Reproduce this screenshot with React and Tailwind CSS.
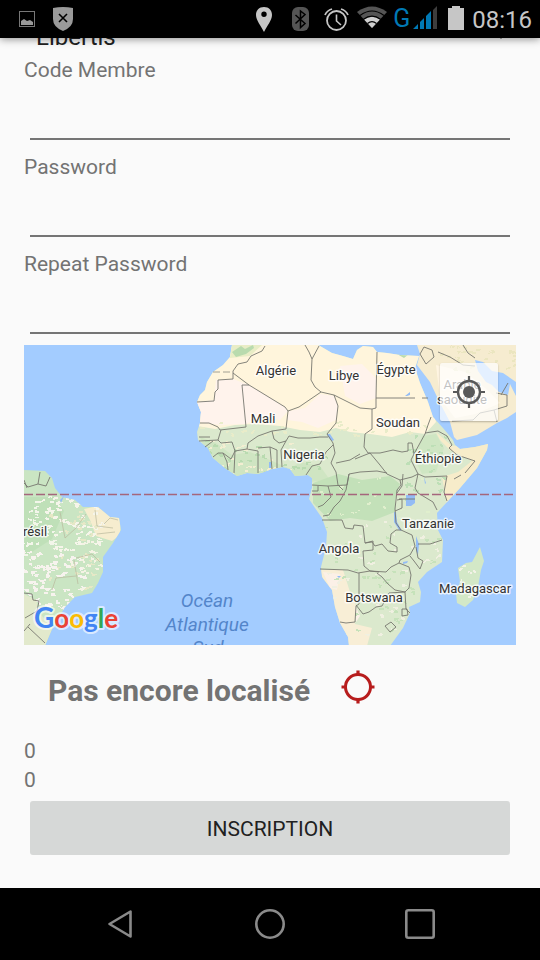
import React from 'react';

const AFRICA =
  'M232 345 L230 357 L223 365 L213 372 L207 382 L205 390 L200 395 L197 402 L201 412 L200 423 L197 432 L198 440 L208 448 L213 458 L225 468 L237 476 L247 473 L258 474 L272 469 L283 467 L290 469 L295 476 L308 475 L312 478 L312 488 L309 499 L315 508 L322 518 L327 532 L326 547 L321 567 L322 577 L332 590 L335 607 L340 623 L348 637 L349 646 L390 646 L403 628 L410 613 L409 607 L420 602 L421 592 L418 582 L427 572 L442 562 L443 540 L438 530 L437 513 L447 502 L460 488 L477 468 L487 450 L488 444 L475 447 L460 449 L455 445 L453 440 L443 428 L433 417 L428 402 L420 383 L415 368 L419 356 L400 355 L387 353 L377 352 L373 347 L363 346 L357 350 L353 359 L343 356 L332 353 L320 346 L316 344 Z';
const ARABIA =
  'M417 345 L420 354 L417 365 L430 382 L440 403 L450 422 L454 437 L457 440 L477 435 L497 423 L507 418 L516 412 L516 344 Z';
const GULF =
  'M475 360 L483 362 L492 371 L503 373 L516 382 L516 396 L510 384 L508 395 L499 392 L492 385 L486 382 L478 371 Z';
const BRAZIL =
  'M24 470 L45 471 L52 478 L55 488 L62 497 L75 500 L83 507 L98 507 L110 517 L119 518 L121 530 L113 543 L103 557 L103 572 L98 583 L92 593 L75 597 L65 607 L53 627 L45 646 L20 646 Z';
const MADAGASCAR =
  'M480 547 L484 561 L481 570 L478 587 L473 600 L465 607 L457 603 L456 593 L460 582 L458 568 L466 563 L472 562 Z';

const BORDERS = [
  // North-west Africa
  'M265 346 L262 351 L251 356 L247 362 L238 364 L233 371 L233 379 L218 380 L218 389 L215 392 L214 401 L197 402',
  'M233 373 L249 385 L285 407 L288 411 L299 407 L321 392 L334 395 L360 408',
  'M249 385 L242 385 L246 427 L220 430 L218 427 L209 423 L200 423',
  'M305 345 L309 352 L312 359 L319 346',
  'M312 359 L311 380 L315 387 L321 392',
  'M288 411 L286 429 L272 431 L258 436 L248 443 L247 449 L235 451 L232 442 L221 443 L218 440 L221 430',
  'M334 395 L338 406 L336 423 L327 434 L333 443 L335 453 L331 463 L336 472 L338 485',
  'M272 431 L274 439 L279 443 L286 441 L289 436 L298 438 L310 438 L320 437 L328 437',
  'M199 437 L210 437 M199 441 L218 440 M205 447 L213 441 M213 457 L218 453 L223 453 L227 462 L228 470 M223 453 L231 459 L235 451',
  'M235 451 L234 473 M247 449 L258 451 L258 473 M258 448 L270 447 L272 469 M270 447 L277 450 L277 468 M282 467 L281 450 L286 441',
  'M306 475 L312 466 L320 464 L326 452 L333 445 M336 463 L350 460 L360 454',
  // Sahel to the Horn
  'M377 352 L376 398 L415 398 M422 398 L428 398 M376 398 L376 408 L372 409 L372 429 L365 434 L364 447 L368 453 L380 453 L393 450 L402 452 L408 451 L408 443 L412 443 L414 454',
  'M360 408 L372 409 M355 459 L370 453 L380 465 L387 474 L400 480 L412 477 L418 474',
  'M431 417 L428 425 L425 434 L420 443 L414 454 L411 460 L418 474 L425 477 L447 476',
  'M425 433 L438 431 L447 436 L452 445 L449 448 L457 455 L475 461 L465 473',
  'M461 475 L454 479 M447 476 L444 492 L447 501 M418 474 L415 488 L418 493 L433 502 L437 510 M403 474 L402 486 L397 493',
  // Congo basin
  'M312 485 L328 486 L347 485 L349 474 L360 472 L377 471 L387 473 M338 485 L343 490 M349 474 L346 490 L340 501 L334 507 L329 515 L323 516 M328 486 L331 497 L323 505 L318 507 M312 491 L318 491 L318 486',
  'M400 480 L401 485 L397 490 L396 500 L395 509 L396 523 L401 530 M397 500 L402 499 L402 508 L395 511 M399 499 L415 499',
  'M322 520 L342 520 L345 528 L353 529 L354 525 L363 526 L365 543 L372 542 L375 546 L382 544 L388 551 L397 552 L397 547 L390 543 L391 534 L396 530 L401 530',
  'M365 543 L373 541 L373 550 L363 551 L364 566 L370 571 L386 572 L391 567 L399 563 L409 567 L411 575 L409 588 L405 592 L395 590 L388 584 L382 577 L377 573',
  'M320 569 L348 570 L358 573 L370 571 L379 572 M359 573 L359 604 L356 606 L355 622 L346 623 L340 622 M356 605 L363 614 L369 612 L376 607 L382 606 L389 593 L405 592 L406 609 L410 613',
  'M401 530 L412 535 L415 546 L410 555 L400 560 L399 563 M418 544 L430 544 L442 540 M416 547 L418 558 L423 561 L420 569 L414 561 L410 556',
  'M385 626 L391 622 L396 627 L390 632 Z M402 609 L407 609 L408 615 L402 616 Z',
  // Arabia
  'M420 354 L426 364 L434 357 L432 350 L424 347 L420 354 M438 352 L450 357 L463 365 L475 366 M463 345 L468 353 L475 358',
  'M452 421 L473 420 L480 413 L494 410 L497 422 M494 410 L507 406 L507 395 L496 393 M501 395 L508 383',
  // Brazil
  'M24 483 L28 487 L38 484 L46 486 L50 477 M38 484 L40 472 M24 480 L27 488',
  'M24 593 L32 594 L33 600 L39 601 L37 611 L25 618 M30 624 L24 631 M28 627 L45 643',
];

const LABELS = [
  ['Algérie', 276, 375],
  ['Libye', 344, 380],
  ['Égypte', 396, 374],
  ['Mali', 263, 423],
  ['Soudan', 398, 427],
  ['Nigeria', 304, 459],
  ['Éthiopie', 438, 463],
  ['Tanzanie', 428, 528],
  ['Angola', 339, 553],
  ['Botswana', 374, 602],
  ['Madagascar', 475, 593],
  ['résil', 35, 536],
];

// Irregular patches of ground cover: each one is a short random walk of small blocks.
function speckles(seed, count, x, y, w, h, steps = 1) {
  let s = seed;
  const next = () => {
    s = (s * 16807) % 2147483647;
    return s / 2147483647;
  };
  let d = '';
  for (let i = 0; i < count; i += 1) {
    let px = Math.round(x + next() * w);
    let py = Math.round(y + next() * h);
    for (let k = 0; k < steps; k += 1) {
      const a = 1 + Math.round(next() * 2);
      const b = 1 + Math.round(next());
      d += `M${px} ${py}h${a}v${b}h${-a}z`;
      px += Math.round(next() * 4 - 2);
      py += Math.round(next() * 2 - 1);
    }
  }
  return d;
}

function WorldMap() {
  return (
    <svg
      className="block h-full w-full"
      viewBox="24 345 492 300"
      preserveAspectRatio="xMidYMid slice"
      role="img"
      aria-label="Carte"
    >
      <defs>
        <clipPath id="africa"><path d={AFRICA} /></clipPath>
        <clipPath id="brazil"><path d={BRAZIL} /></clipPath>
        <clipPath id="madagascar"><path d={MADAGASCAR} /></clipPath>
        <clipPath id="arabia"><path d={ARABIA} /></clipPath>
      </defs>
      <rect x="24" y="345" width="492" height="300" fill="#a3ccff" />

      <path d={AFRICA} fill="#dbe9cd" />
      <g clipPath="url(#africa)">
        <path d="M190 340 H430 V400 L436 422 L425 434 L410 432 L392 437 L370 434 L350 432 L336 428 L320 432 L300 430 L280 426 L255 424 L235 425 L215 429 L190 425 Z" fill="#fff5dc" />
        <path d="M216 380 L233 379 L249 385 L285 407 L288 411 L280 420 L262 417 L246 424 L220 425 L200 422 L197 402 L214 400 Z M320 394 L334 396 L338 406 L336 420 L318 428 L302 422 L287 420 L289 411 L305 408 Z M340 366 L362 364 L376 378 L376 398 L360 404 L345 396 Z" fill="#fff3ec" />
        <path d="M231 345 H262 L250 356 L230 358 Z" fill="#e9edc6" />
        <path d="M232 352 l9 -6 4 3 8 -4 1 3 -8 6 -10 3z M397 354 l12 0 -5 4z" fill="#b9dbae" />
        <path d="M436 432 L452 446 L495 440 L480 480 L447 504 L442 477 L458 472 L472 461 L450 450 L440 440 Z" fill="#f7ecca" />
        <path d="M200 437 L216 443 L232 455 L250 452 L270 460 L290 469 L300 462 L320 466 L330 480 L310 482 L290 480 L230 480 L208 460 Z" fill="#cfe5c2" />
        <path d="M313 483 L338 474 L362 480 L390 476 L400 484 L395 500 L395 512 L372 521 L350 518 L330 521 L313 503 Z" fill="#c3e1b9" />
        <path d="M422 436 L436 434 L444 448 L436 472 L422 474 L415 460 Z" fill="#cfe6c3" />
        <path d="M320 570 L343 570 L350 592 L356 606 L355 624 L372 628 L367 646 L345 646 L333 610 Z" fill="#f8eed6" />
        <path d="M323 572 L340 574 L337 590 L330 588 Z M355 605 L360 616 L356 622 Z" fill="#fbf0e7" />
        <path d={speckles(41, 40, 205, 440, 90, 36, 3)} fill="#f3eed1" />
        <path d={speckles(43, 30, 205, 440, 120, 38, 4)} fill="#b9dbb0" />
        <path d={speckles(97, 50, 325, 515, 115, 130, 4)} fill="#f0f0e1" />
        <path d={speckles(99, 45, 325, 525, 115, 110, 4)} fill="#c6e2ba" />
        <path d={speckles(311, 20, 405, 435, 45, 70, 4)} fill="#bddfb6" />
        <path d={speckles(17, 25, 305, 475, 125, 50, 3)} fill="#e0efcd" />
        <path d={speckles(71, 30, 200, 422, 230, 14, 4)} fill="#e9ecc9" />
      </g>

      <path d={ARABIA} fill="#f6ecd0" />
      <g clipPath="url(#arabia)">
        <path d="M436 365 L465 372 L485 388 L500 403 L475 414 L455 418 L440 398 Z" fill="#fff5e2" />
        <path d={speckles(512, 30, 440, 345, 76, 26, 4)} fill="#ebe6c0" />
        <path d={GULF} fill="#a3ccff" />
      </g>

      <path d={BRAZIL} fill="#cae5c3" />
      <g clipPath="url(#brazil)">
        <path d="M24 497 h30 l10 14 -12 28 -28 18z" fill="#bfe0b8" />
        <path d="M84 509 L98 506 L121 518 L120 535 L112 541 L96 536 L90 520 Z" fill="#f6edcf" />
        <path d={speckles(601, 62, 44, 496, 56, 54, 5)} fill="#f6f5ea" />
        <path d={speckles(603, 40, 22, 494, 34, 60, 3)} fill="#f3f6ea" />
        <path d={speckles(607, 26, 50, 510, 50, 80, 5)} fill="#e6e8c6" />
        <path d={speckles(611, 80, 22, 552, 62, 58, 6)} fill="#f7f3ee" />
        <path d={speckles(619, 18, 70, 540, 32, 50, 4)} fill="#f4f3e4" />
        <path d="M24 594 L36 600 L40 614 L53 627 L45 646 H24 Z" fill="#e2e9cc" />
        <path d="M95 510 l2 16 16 2 M97 534 l18 -2 M104 524 l6 -6 8 2 M60 512 l5 26 11 -10 10 -14 M76 558 l16 -4 8 8 M52 590 l4 -12 20 -2 M74 560 l4 24" fill="none" stroke="#b9b79c" strokeWidth="0.7" />
      </g>
      <path d={MADAGASCAR} fill="#d3e8c7" />
      <g clipPath="url(#madagascar)">
        <path d={speckles(777, 12, 456, 550, 24, 50, 4)} fill="#f2f2e6" />
      </g>

      <g fill="#93bcf5">
        <path d="M406 495 h9 v8 l-4 3 h-5z M394 512 l2 0 1 10 5 9 -3 -1 -5 -8z M416 536 l3 8 -1 11 -2 -5z M327 434 l3 0 4 6 -2 1 -3 -3z M269 462 h2 v6 h-2z" />
        <path d="M424 477 l2 6 -1 1z M403 562 l5 -1 -1 2 -4 1z M337 576 h4 l-2 2z M405 396 l5 -4 0 3 -3 1z M60 500 l4 -4 -3 7z" />
      </g>

      <path d={BORDERS.join(' ')} fill="none" stroke="#77776f" strokeWidth="0.9" strokeLinejoin="round" />
      <path d="M213 372 H232" stroke="#8a8a80" strokeWidth="0.8" strokeDasharray="7 3" />
      <path d="M24 494.500 H516" stroke="#a5667c" strokeWidth="1.500" strokeDasharray="9 3" />

      <g
        fontFamily='Roboto, "Liberation Sans", sans-serif'
        fontSize="13"
        fill="#333333"
        stroke="#ffffff"
        strokeOpacity="0.75"
        strokeWidth="3"
        strokeLinejoin="round"
        paintOrder="stroke"
        textAnchor="middle"
      >
        {LABELS.map(([name, x, y]) => (
          <text key={name} x={x} y={y}>{name}</text>
        ))}
        <text x="462" y="389">Arabie</text>
        <text x="462" y="404">saoudite</text>
      </g>

      <g
        fontFamily='Roboto, "Liberation Sans", sans-serif'
        fontSize="19"
        fontStyle="italic"
        fill="#5385ca"
        textAnchor="middle"
      >
        <text x="207" y="607">Océan</text>
        <text x="207" y="631">Atlantique</text>
        <text x="208" y="654">Sud</text>
      </g>

      <text
        x="34"
        y="628"
        fontFamily='Lato, "Open Sans", sans-serif'
        fontSize="26"
        fontWeight="700"
        stroke="#ffffff"
        strokeOpacity="0.6"
        strokeWidth="4"
        strokeLinejoin="round"
        paintOrder="stroke"
      >
        <tspan fill="#4285f4" fontSize="28">G</tspan>
        <tspan fill="#ea4335">o</tspan>
        <tspan fill="#fbbc05">o</tspan>
        <tspan fill="#4285f4">g</tspan>
        <tspan fill="#34a853">l</tspan>
        <tspan fill="#ea4335">e</tspan>
      </text>
    </svg>
  );
}

function StatusBar() {
  return (
    <header className="relative z-10 flex h-[38px] items-center justify-between bg-black pl-[19px] pr-2 shadow-[0_1px_8px_rgba(0,0,0,0.45)]">
      <div className="flex items-center gap-[18px]">
        <svg width="16" height="26" viewBox="19 6 16 26" aria-hidden="true">
          <rect x="19.500" y="11.500" width="15" height="15" fill="none" stroke="#777" />
          <path d="M21 25 V21 L24 19 L27 21 L30 20 L33 22 V25 Z" fill="#999" />
        </svg>
        <svg width="20" height="26" viewBox="53 6 20 26" aria-hidden="true">
          <path d="M53 8 Q63 6 73 8 V19 Q73 27 63 31 Q53 27 53 19 Z" fill="#9a9a9a" />
          <path d="M59 14 L67 22 M67 14 L59 22" stroke="#000" strokeWidth="1.600" />
        </svg>
      </div>
      <div className="flex items-center gap-1">
        <svg width="28" height="26" viewBox="250 6 28 26" aria-hidden="true">
          <path fillRule="evenodd" d="M264 7 C259 7 256 10.500 256 15 C256 20 261 26 264 32 C267 26 272 20 272 15 C272 10.500 269 7 264 7 Z M264 11.500 a2.700 2.700 0 1 1 0 5.400 a2.700 2.700 0 1 1 0 -5.400 Z" fill="#c6c6c6" />
        </svg>
        <svg width="35" height="26" viewBox="282 6 35 26" aria-hidden="true">
          <rect x="292" y="7" width="17" height="24" rx="6" fill="#555" />
          <path d="M295.500 15 L305 23.500 L300.500 27.500 V11 L305 14.500 L295.500 23.500" fill="none" stroke="#000" strokeWidth="1.500" />
        </svg>
        <svg width="30" height="26" viewBox="321 6 30 26" fill="none" stroke="#c6c6c6" aria-hidden="true">
          <circle cx="336.500" cy="20.500" r="9.500" strokeWidth="1.800" />
          <path d="M336.500 14.500 V21 L341 25" strokeWidth="1.600" />
          <path d="M325 15 Q327 10.500 332 9 M348 15 Q346 10.500 341 9" strokeWidth="1.800" />
        </svg>
        <svg width="34" height="26" viewBox="355 6 34 26" aria-hidden="true">
          <path d="M372 28 L357 12 Q372 1 387 12 Z" fill="#555" />
          <path d="M372 28 L364 19.500 Q372 14 380 19.500 Z" fill="#d0d0d0" />
          <path d="M360 15.500 Q372 6.500 384 15.500 M363.500 19.200 Q372 13 380.500 19.200 M367.500 23.400 Q372 20 376.500 23.400" fill="none" stroke="#000" strokeWidth="1.200" />
        </svg>
        <span className="w-[15px] text-center text-[25px] leading-[26px] text-[#0079b5]">G</span>
        <svg width="28" height="26" viewBox="412 6 28 26" aria-hidden="true">
          <path d="M413 29 L418 24 V29 Z M420 22 L424 18 V29 H420 Z M426 16 L431 11 V29 H426 Z" fill="#0079b5" />
          <path d="M433 10 L437 6 V29 H433 Z" fill="#3d3d3d" />
        </svg>
        <svg width="24" height="26" viewBox="444 6 24 26" aria-hidden="true">
          <path d="M448 8 H452 V6 H460 V8 H464 V30 H448 Z" fill="#c6c6c6" />
        </svg>
        <time className="pt-[2px] text-[24px] leading-[26px] text-[#c6c6c6]">08:16</time>
      </div>
    </header>
  );
}

function Field({ id, label, type }) {
  return (
    <div>
      <label htmlFor={id} className="block text-[21px] leading-[32px]">{label}</label>
      <div className="px-[6px] pb-[11px]">
        <input
          id={id}
          type={type}
          className="block h-[54px] w-full border-b-2 border-[#757575] bg-transparent text-[24px] text-[#212121] outline-none"
        />
      </div>
    </div>
  );
}

export default function App() {
  return (
    <div className="flex min-h-screen flex-col bg-[#fafafa] font-['Roboto','Liberation_Sans',sans-serif] text-[#737373]">
      <StatusBar />
      <main className="flex-1 overflow-hidden px-6">
        <div className="relative -mt-[18px]">
          <select
            aria-label="Réseau"
            className="block h-[34px] w-full appearance-none bg-transparent pl-3 text-[24px] leading-[34px] text-[#212121] outline-none"
          >
            <option>Libertis</option>
          </select>
          <svg className="absolute right-2 top-[11px]" width="14" height="8" viewBox="0 0 14 8" aria-hidden="true">
            <path d="M0 0 H14 L7 8 Z" fill="#555" />
          </svg>
        </div>

        <form onSubmit={(event) => event.preventDefault()}>
          <Field id="code" label="Code Membre" type="text" />
          <Field id="password" label="Password" type="password" />
          <Field id="repeat" label="Repeat Password" type="password" />

          <div className="relative h-[300px] overflow-hidden">
            <WorldMap />
            <button
              type="button"
              aria-label="Ma position"
              className="absolute right-[18px] top-[18px] flex size-[58px] items-center justify-center rounded-[2px] bg-white/70 shadow-[0_1px_2px_rgba(0,0,0,0.25)]"
            >
              <svg width="32" height="32" viewBox="0 0 32 32" fill="none" stroke="#595959" aria-hidden="true">
                <circle cx="16" cy="16" r="11" strokeWidth="2.400" />
                <circle cx="16" cy="16" r="6" fill="#595959" stroke="none" />
                <path d="M16 0 V6 M16 26 V32 M0 16 H6 M26 16 H32" strokeWidth="2.200" />
              </svg>
            </button>
          </div>

          <div className="flex h-[92px] items-center gap-[31px] pl-6">
            <p className="text-[30px] font-bold leading-[36px]">Pas encore localisé</p>
            <button type="button" aria-label="Localiser" className="mb-2">
              <svg width="34" height="34" viewBox="0 0 34 34" fill="none" stroke="#b71c1c" aria-hidden="true">
                <circle cx="17" cy="17" r="12.500" strokeWidth="3" />
                <path d="M17 0.500 V5 M17 29 V33.500 M0.500 17 H5 M29 17 H33.500" strokeWidth="3.200" />
              </svg>
            </button>
          </div>

          <p className="text-[21px] leading-[28px]">0</p>
          <p className="text-[21px] leading-[30px]">0</p>

          <div className="px-[6px] pt-[6px] pb-6">
            <button
              type="submit"
              className="block h-[54px] w-full rounded-[3px] bg-[#d6d8d7] pt-[2px] text-[21px] leading-[30px] text-[#212121]"
            >
              INSCRIPTION
            </button>
          </div>
        </form>
      </main>

      <nav className="flex h-[72px] items-center bg-black px-[45px]" aria-label="Navigation">
        <button type="button" aria-label="Retour" className="flex flex-1 justify-center">
          <svg width="32" height="32" viewBox="0 0 32 32" fill="none" stroke="#8a8a8a" strokeWidth="2.600" strokeLinejoin="round" aria-hidden="true">
            <path d="M26.500 3.500 V28.500 L5.500 16 Z" />
          </svg>
        </button>
        <button type="button" aria-label="Accueil" className="flex flex-1 justify-center">
          <svg width="32" height="32" viewBox="0 0 32 32" fill="none" stroke="#8a8a8a" strokeWidth="2.600" aria-hidden="true">
            <circle cx="16" cy="16" r="13.700" />
          </svg>
        </button>
        <button type="button" aria-label="Applications récentes" className="flex flex-1 justify-center">
          <svg width="32" height="32" viewBox="0 0 32 32" fill="none" stroke="#8a8a8a" strokeWidth="2.600" aria-hidden="true">
            <rect x="2.300" y="2.300" width="27.400" height="27.400" rx="2" />
          </svg>
        </button>
      </nav>
    </div>
  );
}
